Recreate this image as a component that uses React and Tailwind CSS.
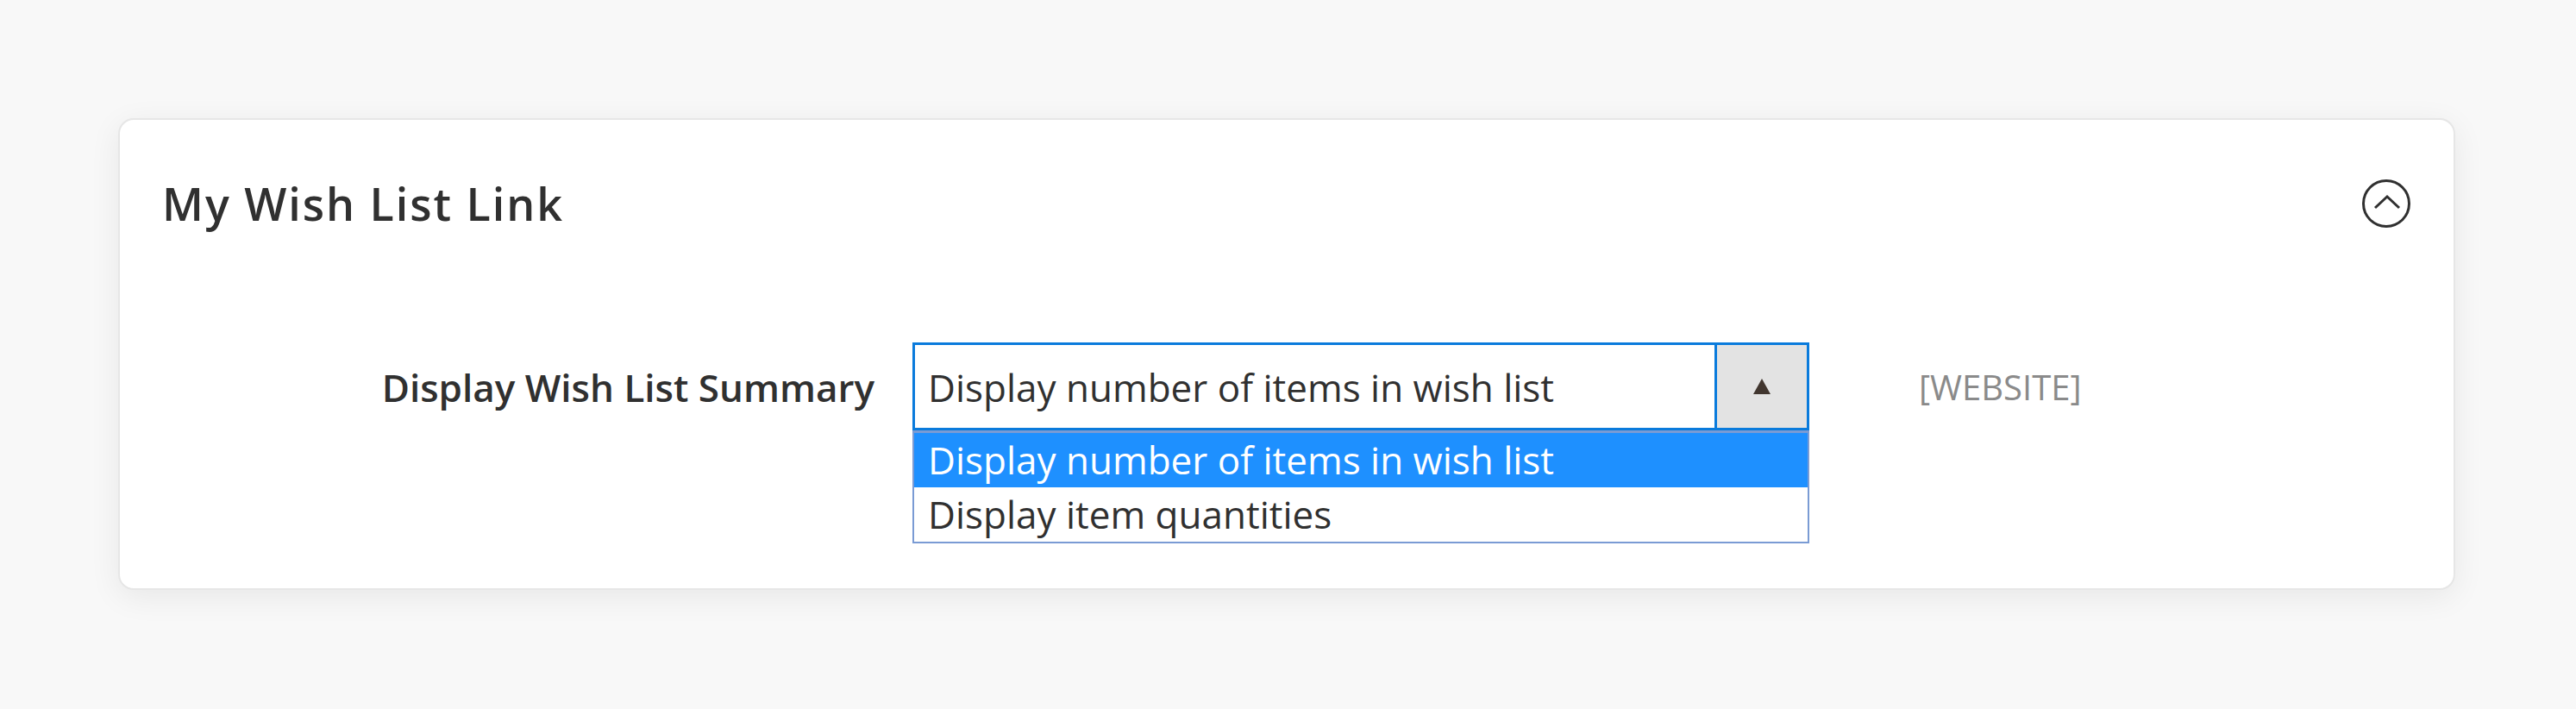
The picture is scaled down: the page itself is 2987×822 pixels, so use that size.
export default function App() {
  return (
    <div
      className="h-[822px] w-full bg-[#f8f8f8] pl-[137px] pt-[137px]"
      style={{ fontFamily: '"Open Sans", "Liberation Sans", sans-serif' }}
    >
      <div className="w-[2710px] rounded-[18px] border-2 border-[#e6e6e6] bg-white pb-[52px] pl-[49px] pr-[48px] pt-[69px] shadow-[0_8px_36px_rgba(0,0,0,0.07)]">
        <div className="flex h-[56px] items-center justify-between">
          <h2 className="text-[52px] font-semibold leading-none tracking-[0.038em] text-[#303030]">
            My Wish List Link
          </h2>
          <svg width="56" height="56" viewBox="0 0 56 56" fill="none" className="mr-[2px]">
            <circle cx="28" cy="28" r="26.5" stroke="#303030" strokeWidth="3" />
            <polyline points="15,33 29,20 43,33" stroke="#303030" strokeWidth="3" fill="none" />
          </svg>
        </div>

        <div className="mt-[133px] flex items-start">
          <div className="flex h-[102px] w-[826px] items-center justify-end pt-[2px] text-[44px] font-semibold text-[#303030]">
            Display Wish List Summary
          </div>

          <div className="ml-[44px] w-[1040px]">
            <div className="flex h-[102px] border-[3px] border-[#0a7bdc]">
              <div className="flex flex-1 items-center pl-[15px] pt-[2px] text-[44px] text-[#303030]">
                Display number of items in wish list
              </div>
              <div className="flex w-[107px] items-center justify-center border-l-[3px] border-[#0a7bdc] bg-[#e3e3e3]">
                <svg width="20" height="18" viewBox="0 0 20 18">
                  <polygon points="10,0 20,18 0,18" fill="#41362f" />
                </svg>
              </div>
            </div>
            <div className="border-2 border-t-[3px] border-[#7a9bd4] text-[44px] leading-[63px]">
              <div className="bg-[#1e90ff] pl-[16px] text-white">Display number of items in wish list</div>
              <div className="pl-[16px] text-[#303030]">Display item quantities</div>
            </div>
          </div>

          <div className="ml-[127px] flex h-[102px] items-center pt-[2px] text-[40px] text-[#8a8a8a]">
            [WEBSITE]
          </div>
        </div>
      </div>
    </div>
  );
}
